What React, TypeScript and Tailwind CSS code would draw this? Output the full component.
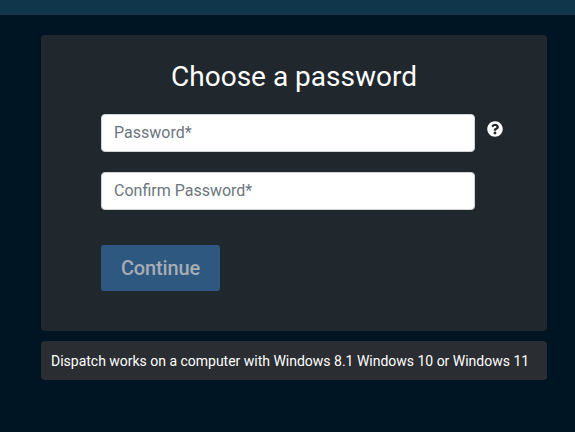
import { useState } from "react";
import { FaQuestionCircle } from "react-icons/fa";

type PasswordFieldProps = {
  placeholder: string;
  value: string;
  onChange: (value: string) => void;
};

function PasswordField({ placeholder, value, onChange }: PasswordFieldProps) {
  return (
    <input
      type="password"
      aria-label={placeholder}
      placeholder={placeholder}
      value={value}
      onChange={(event) => onChange(event.target.value)}
      className="block h-[38px] w-[374px] rounded border border-[#ced4da] bg-white px-3 pt-[5px] pb-[7px] text-base text-[#495057] placeholder:text-[#6c757d] focus:outline-2 focus:outline-[#80bdff]"
    />
  );
}

export default function App() {
  const [password, setPassword] = useState("");
  const [confirmPassword, setConfirmPassword] = useState("");
  const canContinue = password !== "" && password === confirmPassword;

  return (
    <div className="min-h-screen bg-[#001524] font-[Roboto,sans-serif] text-white">
      <header className="h-[15px] bg-[#0f364a]" />
      <main className="ml-[41px] flex w-[506px] flex-col gap-2.5 pt-5">
        <form
          className="h-[296px] rounded bg-[#20272d] pl-[60px] pt-[25px]"
          onSubmit={(event) => event.preventDefault()}
        >
          <h1 className="mr-[60px] text-center text-[28px] leading-[34px]">
            Choose a password
          </h1>
          <div className="mt-5 flex items-start gap-3">
            <PasswordField
              placeholder="Password*"
              value={password}
              onChange={setPassword}
            />
            <button
              type="button"
              aria-label="Password requirements"
              className="mt-[7px]"
            >
              <FaQuestionCircle aria-hidden="true" size={16} />
            </button>
          </div>
          <div className="mt-5">
            <PasswordField
              placeholder="Confirm Password*"
              value={confirmPassword}
              onChange={setConfirmPassword}
            />
          </div>
          <button
            type="submit"
            disabled={!canContinue}
            className="mt-[35px] h-[46px] w-[119px] rounded-[3px] bg-[#3e82c8] text-xl font-medium tracking-[-0.15px] text-white disabled:bg-[#2f5880] disabled:text-[#a6adb4]"
          >
            Continue
          </button>
        </form>
        <p className="h-[39px] rounded bg-[#2a2d31] pl-2.5 text-sm leading-[41px] tracking-[-0.01px] whitespace-nowrap">
          Dispatch works on a computer with Windows 8.1 Windows 10 or Windows 11
        </p>
      </main>
    </div>
  );
}
